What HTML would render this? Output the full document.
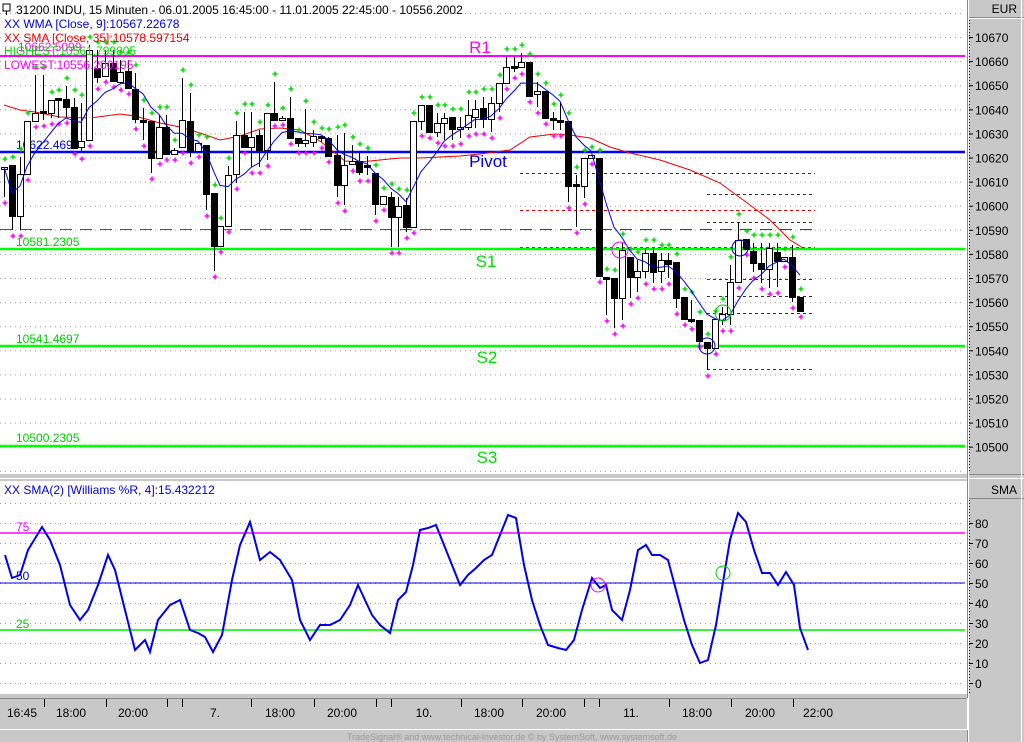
<!DOCTYPE html>
<html><head><meta charset="utf-8">
<style>
html,body{margin:0;padding:0;background:#c8c8c8;}
svg{display:block;font-family:"Liberation Sans",sans-serif;}
</style></head>
<body>
<svg id="s" width="1024" height="742" viewBox="0 0 1024 742" xmlns="http://www.w3.org/2000/svg">
<rect x="0" y="0" width="1024" height="742" fill="#c8c8c8"/>
<rect x="0" y="0" width="967" height="474" fill="#fff"/>
<rect x="0" y="481" width="967" height="213" fill="#fff"/>
<line x1="0" y1="478.5" x2="967" y2="478.5" stroke="#fff"/>
<line x1="967.5" y1="0" x2="967.5" y2="742" stroke="#888"/>
<line x1="968.5" y1="0" x2="968.5" y2="742" stroke="#fff"/>
<line x1="969" y1="17.5" x2="1024" y2="17.5" stroke="#888"/>
<line x1="969" y1="18.5" x2="1024" y2="18.5" stroke="#fff"/>
<line x1="969" y1="498.5" x2="1024" y2="498.5" stroke="#888"/>
<line x1="969" y1="478.5" x2="1024" y2="478.5" stroke="#fff"/>
<line x1="969" y1="474.5" x2="1024" y2="474.5" stroke="#888"/>
<line x1="1021.5" y1="0" x2="1021.5" y2="742" stroke="#fff"/>
<text x="1017" y="13" font-size="12" text-anchor="end">EUR</text>
<text x="1017" y="494" font-size="12" text-anchor="end">SMA</text>
<line x1="0" y1="698.5" x2="967" y2="698.5" stroke="#888"/>
<line x1="0" y1="729.5" x2="967" y2="729.5" stroke="#fff"/>
<line x1="967.5" y1="698" x2="967.5" y2="730" stroke="#fff"/>
<g id="g"></g>
</svg>
<script>
var NS="http://www.w3.org/2000/svg",G=document.getElementById("g");
function el(t,a,txt){var e=document.createElementNS(NS,t);for(var k in a)e.setAttribute(k,a[k]);if(txt!==undefined)e.textContent=txt;G.appendChild(e);return e;}
function ln(x1,y1,x2,y2,c,w,d){var a={x1:x1,y1:y1,x2:x2,y2:y2,stroke:c,"stroke-width":w||1};if(d)a["stroke-dasharray"]=d;return el("line",a);}
function tx(x,y,s,c,sz,anc){return el("text",{x:x,y:y,fill:c,"font-size":sz||12,"text-anchor":anc||"start"},s);}
function cross(x,y,c){el("path",{d:"M"+(x-2.5)+" "+y+"h5M"+x+" "+(y-2.5)+"v5",stroke:c,"stroke-width":1.5,fill:"none"});}
for(var k=-1;k<19;k++){var y=37+24.1*k+0.5;if(y<2||y>472)continue;ln(0,y,965,y,"#999",1,"1,4");}
ln(969.5,20,969.5,472,"#000",1,"1,2");
for(var p=10670,k=0;p>=10500;p-=10,k++){var y=37+24.1*k;ln(969,y+0.5,973,y+0.5,"#000");tx(975,y+5,String(p),"#000",12);}
for(var v=0;v<=90;v+=10){var y=683-2*v+0.5;ln(0,y,965,y,"#999",1,"1,4");}
ln(969.5,500,969.5,694,"#000",1,"1,2");
for(var v=0;v<=80;v+=10){var y=683-2*v;ln(969,y+0.5,973,y+0.5,"#000");tx(975,y+5,String(v),"#000",12);}
[44,106,167,182,251,314,376,391,461,522,584,599,669,731,793].forEach(function(x){ln(x+0.5,699,x+0.5,707,"#000");});
[["16:45",22],["18:00",71],["20:00",133],["7.",215],["18:00",280],["20:00",342],["10.",424],["18:00",489],["20:00",551],["11.",631],["18:00",697],["20:00",760],["22:00",818]].forEach(function(a){tx(a[1],717,a[0],"#000",12,"middle");});
tx(512,740,"TradeSignal® and www.technical-investor.de © by  SystemSoft, www.systemsoft.de","#999",9,"middle");
ln(0,229.5,820,229.5,"#555",1,"12,8");
ln(520,229.5,820,229.5,"#d00",1,"12,8");
ln(520,173.5,815,173.5,"#333",1,"3,3");
ln(520,210.5,815,210.5,"#d00",1,"3,3");
ln(520,247.5,815,247.5,"#d00",1,"3,3");
ln(707,194.5,815,194.5,"#333",1,"3,3");
ln(707,222.5,815,222.5,"#333",1,"3,3");
[279,296,313,369].forEach(function(y){ln(707,y+0.5,815,y+0.5,"#333",1,"3,3");});
ln(0,56,965,56,"#f0f",2);ln(0,152,965,152,"#00f",2.5);ln(0,249,965,249,"#0f0",2.5);ln(0,346,965,346,"#0f0",2.5);ln(0,446,965,446,"#0f0",2.5);
tx(480,53,"R1","#f0f",17,"middle");tx(488,167,"Pivot","#00d",17,"middle");tx(486,267,"S1","#0d0",17,"middle");tx(487,363,"S2","#0d0",17,"middle");tx(487,463,"S3","#0d0",17,"middle");
tx(16,149,"10622.4697","#00d",12);tx(16,246,"10581.2305","#0c0",12);tx(16,343,"10541.4697","#0c0",12);tx(16,442,"10500.2305","#0c0",12);
var C=[[4,167,169,167,197,1],[12,165,216,165,230,0],[20,174,216,157,230,1],[27,121,174,121,174,1],[35,113,121,75,121,1],[43,111,113,75,120,0],[51,100,113,100,118,1],[58,98,100,98,118,0],[66,99,107,86,117,0],[74,107,148,98,148,0],[81,141,147,103,153,1],[89,50,140,45,140,1],[97,68,77,50,83,0],[105,63,76,50,76,1],[113,63,81,50,81,0],[120,72,82,60,84,1],[128,71,88,60,88,0],[135,89,119,73,123,0],[143,120,121,108,140,0],[151,121,158,121,173,0],[159,127,158,115,158,1],[166,127,154,115,154,0],[174,150,154,148,154,1],[182,120,147,78,147,1],[190,121,151,93,157,0],[198,143,151,143,151,1],[206,145,194,145,210,0],[214,193,246,193,271,0],[220,226,246,226,246,1],[228,175,226,166,226,1],[236,135,174,121,183,1],[244,135,147,112,147,0],[251,137,147,112,167,1],[259,135,150,130,167,0],[267,113,150,113,160,1],[274,113,120,82,120,0],[282,118,119,116,119,1],[290,118,138,97,138,0],[298,138,143,138,147,0],[305,140,143,109,147,1],[313,136,142,130,147,1],[321,136,138,136,142,0],[328,138,156,137,156,0],[337,155,185,135,197,0],[344,165,185,133,205,1],[352,161,164,145,165,1],[359,161,172,152,175,0],[367,165,167,156,175,0],[375,173,204,173,215,0],[383,196,204,196,204,1],[391,197,217,192,247,0],[398,206,217,197,247,1],[406,205,227,198,232,0],[413,121,227,121,227,1],[421,105,121,105,130,1],[429,105,132,105,132,0],[437,123,132,113,137,1],[444,118,123,113,140,1],[452,117,129,117,140,0],[460,127,129,117,138,1],[468,115,127,100,130,1],[475,109,117,100,128,1],[483,108,119,97,128,0],[491,103,119,97,132,1],[499,83,103,83,112,1],[506,67,83,57,83,1],[514,66,67,57,72,0],[521,62,67,53,68,1],[529,62,96,62,96,0],[537,91,94,82,107,1],[545,91,118,91,118,0],[553,118,119,112,130,0],[560,120,121,103,130,0],[568,121,186,121,202,0],[576,184,186,175,227,0],[584,158,186,158,198,1],[591,155,158,155,158,1],[599,158,276,158,276,0],[606,277,278,277,315,0],[614,278,298,278,328,0],[622,250,298,242,320,1],[630,257,277,257,298,0],[637,271,277,260,292,1],[645,253,271,248,278,1],[653,253,272,248,283,0],[661,260,271,253,283,1],[668,260,264,253,278,0],[676,262,298,262,308,0],[684,297,319,297,319,0],[691,319,321,300,323,0],[699,320,341,320,341,0],[707,342,348,342,370,0],[715,319,348,319,348,1],[722,314,320,307,325,1],[730,282,314,265,325,1],[738,240,282,222,282,1],[746,239,249,239,249,0],[753,251,263,243,272,0],[761,263,269,243,283,0],[769,248,269,243,288,1],[777,252,261,243,287,0],[784,257,261,257,261,1],[792,257,297,245,302,0],[800,297,311,297,311,0]];
var R=[[4,105],[20,110],[35,112],[60,117],[90,118],[120,114],[135,116],[160,123],[180,127],[200,133],[220,140],[240,136],[260,129],[280,128],[300,130],[320,141],[345,161],[360,162],[380,160],[400,158],[420,158],[440,157],[460,156],[480,154],[510,150],[530,137],[555,134],[570,135],[590,138],[610,147],[630,153],[660,160],[690,170],[720,183],[750,205],[770,220],[790,240],[803,248]];
el("polyline",{points:R.map(function(p){return p.join(",")}).join(" "),fill:"none",stroke:"#e00","stroke-width":1});
C.forEach(function(c){var x=c[0]+0.5;
 ln(x,c[3],x,c[4],"#000",1);
 var h=Math.max(c[2]-c[1],2);
 el("rect",{x:c[0]-2.5,y:c[1]+0.5,width:6,height:h,fill:c[5]?"#fff":"#000",stroke:"#000","stroke-width":1});
 cross(c[0]+1,c[3]-8,"#0d0");cross(c[0]+1,c[4]+6,"#f0f");
});
var cl=C.map(function(c){return c[5]?c[1]:c[2];}),pts=[];
for(var i=0;i<cl.length;i++){var s=0,w=0;for(var j=0;j<9&&i-j>=0;j++){s+=cl[i-j]*(9-j);w+=9-j;}pts.push(C[i][0]+","+(s/w).toFixed(1));}
el("polyline",{points:pts.join(" "),fill:"none",stroke:"#00e","stroke-width":1});
el("circle",{cx:620,cy:250,r:8,fill:"none",stroke:"#f0f"});el("circle",{cx:707,cy:346,r:8,fill:"none",stroke:"#00d"});
el("circle",{cx:723,cy:313,r:8,fill:"none",stroke:"#0c0"});el("circle",{cx:740,cy:248,r:8,fill:"none",stroke:"#00d"});
el("rect",{x:3,y:4,width:7,height:7,fill:"none",stroke:"#000"});ln(6.5,11,6.5,15,"#000");
tx(16,14,"31200  INDU, 15 Minuten - 06.01.2005 16:45:00 - 11.01.2005 22:45:00 - 10556.2002","#000",12);
tx(4,28,"XX WMA [Close, 9]:10567.22678","#00d",12);
tx(4,42,"XX SMA [Close, 35]:10578.597154","#e00",12);
tx(18,51,"10662.5099","#f0f",12);
tx(4,55,"HIGHEST:10561.799805","#0d0",12);
tx(4,69,"LOWEST:10556.200195","#f0f",12);
ln(0,533,965,533,"#f0f",1.5);ln(0,583,965,583,"#00d",1);ln(0,630,965,630,"#0e0",1.5);
tx(16,531,"75","#f0f",12);tx(16,580,"50","#00d",12);tx(16,628,"25","#0c0",12);
tx(4,494,"XX SMA(2) [Williams %R, 4]:15.432212","#00d",12);
var W=[[5,555],[12,578],[20,575],[28,550],[42,527],[50,540],[60,565],[70,605],[80,620],[88,610],[98,585],[108,555],[115,570],[125,610],[135,650],[145,640],[150,652],[158,620],[170,605],[180,600],[190,630],[198,633],[205,637],[213,652],[222,635],[232,580],[240,545],[250,522],[260,560],[270,552],[280,560],[292,580],[300,620],[310,640],[320,625],[330,625],[340,620],[350,605],[358,585],[365,600],[372,615],[380,625],[390,633],[398,600],[406,592],[413,565],[420,530],[428,528],[436,525],[444,545],[452,565],[460,585],[468,575],[476,568],[484,560],[492,555],[500,535],[508,515],[516,518],[524,565],[532,600],[540,625],[548,645],[558,648],[566,650],[574,640],[582,610],[592,578],[600,588],[606,585],[612,610],[622,620],[630,590],[638,550],[646,545],[652,555],[660,555],[668,560],[676,590],[684,620],[692,645],[700,663],[708,660],[716,625],[722,588],[730,540],[738,513],[746,522],[754,550],[762,573],[770,573],[778,585],[786,572],[794,585],[800,628],[808,650]];
el("polyline",{points:W.map(function(p){return p.join(",")}).join(" "),fill:"none",stroke:"#00e","stroke-width":2});
el("circle",{cx:598,cy:585,r:7,fill:"none",stroke:"#f0f"});el("circle",{cx:723,cy:573,r:7,fill:"none",stroke:"#0c0"});
</script>
</body></html>
